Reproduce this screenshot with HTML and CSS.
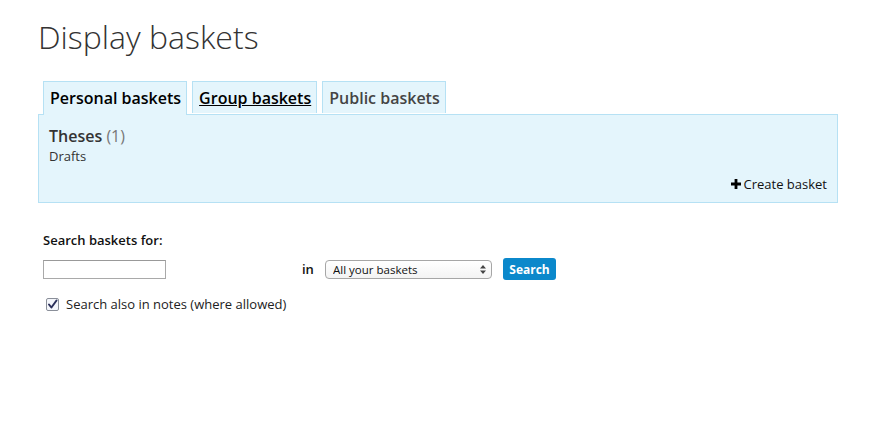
FILE: index.html
```html
<!DOCTYPE html>
<html>
<head>
<meta charset="utf-8">
<link rel="stylesheet" href="styles.css">
</head>
<body>
<div class="page">
  <h1 class="title">Display baskets</h1>
  <div class="tabs">
    <div class="tab active">Personal baskets</div>
    <div class="tab"><a class="tab-link" href="#">Group baskets</a></div>
    <div class="tab muted">Public baskets</div>
  </div>
  <div class="panel">
    <div class="topic"><span class="topic-name">Theses</span> <span class="count">(1)</span></div>
    <div class="sub">Drafts</div>
    <div class="create">
      <svg class="plus" width="10" height="10" viewBox="0 0 10 10"><path d="M3.6 0h2.8v3.6H10v2.8H6.4V10H3.6V6.4H0V3.6h3.6z" fill="#000"/></svg>
      <span>Create basket</span>
    </div>
  </div>
  <div class="search">
    <div class="search-label">Search baskets for:</div>
    <div class="search-row">
      <div class="cell-input"><input class="text-input" type="text"></div>
      <span class="in">in</span>
      <div class="select-wrap">
        <select class="select"><option>All your baskets</option></select>
        <svg class="arrows" width="6" height="9" viewBox="0 0 6 9"><path d="M3 0L6 3.5H0z M3 9L0 5.5h6z" fill="#444"/></svg>
      </div>
      <button class="btn">Search</button>
    </div>
    <label class="check">
      <span class="box"><svg width="13" height="13" viewBox="0 0 13 13"><rect x="0.5" y="0.5" width="12" height="12" rx="1.5" fill="#f4f6fb" stroke="#8a8f99"/><path d="M3 6.5l2.4 3L10.5 2.5" fill="none" stroke="#2a2f5a" stroke-width="2" stroke-linecap="round" stroke-linejoin="round"/></svg></span>
      <span>Search also in notes (where allowed)</span>
    </label>
  </div>
</div>
</body>
</html>
```

FILE: styles.css
```css
html, body {
  margin: 0;
  padding: 0;
  background: #fff;
}
body {
  font-family: "Open Sans", "DejaVu Sans", sans-serif;
  color: #333;
}
.page {
  width: 800px;
  padding-left: 38px;
}
.title {
  margin: 16px 0 0 0;
  font-size: 32px;
  font-weight: 300;
  line-height: 42px;
  color: #333;
}
.tabs {
  display: flex;
  gap: 5px;
  margin-top: 23px;
  padding-left: 5px;
}
.tab {
  font-size: 16px;
  font-weight: 600;
  line-height: 22px;
  padding: 5px 5px 5px 6px;
  border: 1px solid #b6e1f4;
  border-bottom: none;
  background: #e4f5fc;
  color: #000;
  height: 32px;
  box-sizing: border-box;
  margin-bottom: 0;
}
.tab.active {
  height: 34px;
  margin-bottom: -1px;
  position: relative;
  z-index: 1;
}
.tab.muted {
  color: #444;
}
.tab-link {
  color: #000;
  text-decoration: underline;
}
.panel {
  border: 1px solid #b6e1f4;
  background: #e4f5fc;
  padding: 10px 10px 0 10px;
  box-sizing: border-box;
  height: 89px;
  display: flex;
  flex-direction: column;
}
.topic {
  font-size: 16px;
  line-height: 22px;
}
.topic-name {
  font-weight: 600;
  color: #333;
}
.count {
  color: #777;
}
.sub {
  font-size: 13px;
  line-height: 18px;
  color: #333;
  margin-top: 0;
}
.create {
  margin-top: auto;
  align-self: flex-end;
  display: flex;
  align-items: center;
  gap: 3px;
  font-size: 13px;
  line-height: 18px;
  color: #111;
  margin-bottom: 9px;
}
.plus {
  display: block;
}
.search {
  padding-left: 5px;
  margin-top: 28px;
}
.search-label {
  font-size: 13px;
  font-weight: 600;
  line-height: 18px;
  color: #111;
}
.search-row {
  display: flex;
  align-items: center;
  margin-top: 9px;
  height: 22px;
}
.cell-input {
  width: 259px;
}
.text-input {
  display: block;
  width: 123px;
  height: 19px;
  box-sizing: border-box;
  border: 1px solid #a9a9a9;
  border-top-color: #999;
  margin: 0;
  padding: 0;
  background: #fff;
}
.in {
  font-size: 13px;
  color: #111;
  font-weight: 600;
  width: 23px;
}
.select-wrap {
  position: relative;
  width: 167px;
  height: 19px;
}
.select {
  display: block;
  appearance: none;
  -webkit-appearance: none;
  width: 167px;
  height: 19px;
  box-sizing: border-box;
  border: 1px solid #a6a6a6;
  border-radius: 4px;
  background: linear-gradient(#fff, #f3f3f3);
  font-family: "Open Sans", "DejaVu Sans", sans-serif;
  font-size: 11.5px;
  color: #111;
  padding: 0 0 0 7px;
  margin: 0;
  line-height: 17px;
}
.arrows {
  position: absolute;
  right: 6px;
  top: 5px;
}
.btn {
  margin-left: 11px;
  height: 22px;
  width: 53px;
  border: none;
  border-radius: 3px;
  background: #0b88cb;
  color: #fff;
  font-family: "Open Sans", "DejaVu Sans", sans-serif;
  font-size: 12px;
  font-weight: 700;
  padding: 0;
}
.check {
  display: flex;
  align-items: center;
  gap: 7px;
  margin-top: 15px;
  padding-left: 3px;
  font-size: 13px;
  line-height: 18px;
  color: #222;
}
.box svg {
  display: block;
}
```
